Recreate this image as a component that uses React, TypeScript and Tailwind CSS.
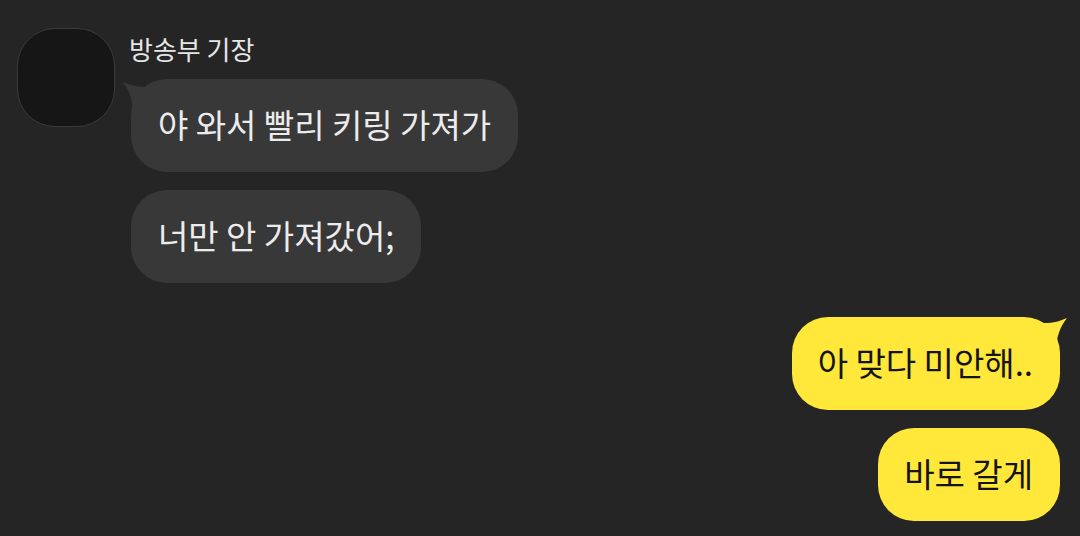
import type { ReactNode } from 'react';

const font = { fontFamily: '"Noto Sans CJK KR", "Noto Sans", sans-serif' };

function Bubble({ mine, tail, children }: { mine?: boolean; tail?: boolean; children: ReactNode }) {
  return (
    <div
      className={
        'relative h-[93px] rounded-[36px] px-[27px] flex items-center text-[33px] ' +
        (mine ? 'bg-[#ffe83a] text-[#141414] pl-[26px]' : 'bg-[#383838] text-[#ececec]')
      }
    >
      {tail && !mine && (
        <svg className="absolute left-[-10px] top-0" width="30" height="40" viewBox="0 0 30 40">
          <path d="M1 3 C8 5 14 8 24 8 L24 36 L12 36 C12 20 8 10 1 3 Z" fill="#383838" />
        </svg>
      )}
      {tail && mine && (
        <svg className="absolute right-[-8px] top-0" width="30" height="40" viewBox="0 0 30 40">
          <path d="M29 1 C22 4 16 6 6 6 L6 36 L18 36 C18 20 22 10 29 1 Z" fill="#ffe83a" />
        </svg>
      )}
      <span className="relative leading-none -mt-[3px]">{children}</span>
    </div>
  );
}

export default function App() {
  return (
    <div className="w-[1080px] h-[536px] bg-[#252525] overflow-hidden" style={font}>
      <div className="flex pl-[17px] pt-[28px] gap-[16px]">
        <div className="w-[98px] h-[99px] rounded-[38px] bg-[#161616] border border-[#3a3a3a] shrink-0" />
        <div className="flex flex-col items-start">
          <div className="text-[26px] text-[#e6e6e6] leading-none mt-[8px] -ml-[2px]">방송부 기장</div>
          <div className="flex flex-col items-start gap-[18px] mt-[17px]">
            <Bubble tail>야 와서 빨리 키링 가져가</Bubble>
            <Bubble>너만 안 가져갔어;</Bubble>
          </div>
        </div>
      </div>
      <div className="flex flex-col items-end gap-[18px] pr-[20px] mt-[34px]">
        <Bubble mine tail>아 맞다 미안해..</Bubble>
        <Bubble mine>바로 갈게</Bubble>
      </div>
    </div>
  );
}
